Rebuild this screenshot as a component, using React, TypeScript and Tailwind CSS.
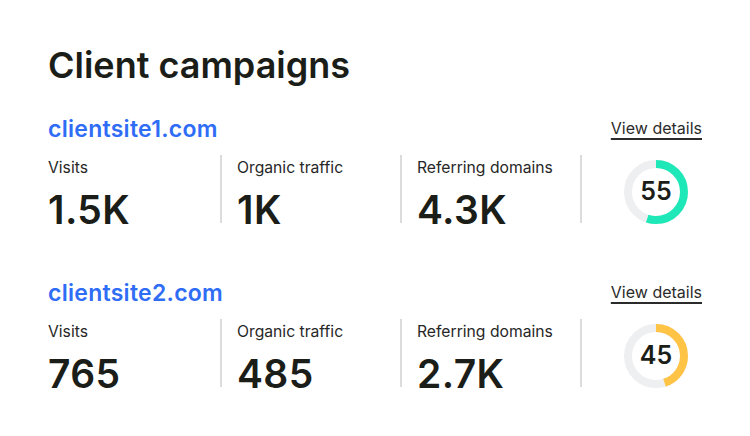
import React from "react";

type Metric = { label: string; value: string };

type Campaign = {
  domain: string;
  metrics: Metric[];
  score: number;
  color: string;
};

const campaigns: Campaign[] = [
  {
    domain: "clientsite1.com",
    metrics: [
      { label: "Visits", value: "1.5K" },
      { label: "Organic traffic", value: "1K" },
      { label: "Referring domains", value: "4.3K" },
    ],
    score: 55,
    color: "#1fe8b8",
  },
  {
    domain: "clientsite2.com",
    metrics: [
      { label: "Visits", value: "765" },
      { label: "Organic traffic", value: "485" },
      { label: "Referring domains", value: "2.7K" },
    ],
    score: 45,
    color: "#ffc445",
  },
];

function ScoreRing({ score, color }: { score: number; color: string }) {
  const r = 28;
  const c = 2 * Math.PI * r;
  return (
    <div className="relative h-16 w-16">
      <svg width="64" height="64" viewBox="0 0 64 64" className="-rotate-90">
        <circle cx="32" cy="32" r={r} fill="none" stroke="#eeeff1" strokeWidth="8" />
        <circle
          cx="32"
          cy="32"
          r={r}
          fill="none"
          stroke={color}
          strokeWidth="8"
          strokeDasharray={`${(c * score) / 100} ${c}`}
        />
      </svg>
      <span className="absolute inset-0 flex items-center justify-center text-[25px] font-semibold text-[#1b1d18]">
        {score}
      </span>
    </div>
  );
}

function CampaignBlock({ campaign }: { campaign: Campaign }) {
  return (
    <div>
      <div className="flex h-8 items-start justify-between">
        <a className="text-[23px] font-semibold leading-8 tracking-[0.012em] text-[#2f6df6]">
          {campaign.domain}
        </a>
        <a className="mt-[5px] text-[16px] leading-5 text-[#2b2b2b] underline decoration-[1.5px] underline-offset-[4px]">
          View details
        </a>
      </div>
      <div className="mt-[10px] flex h-[68px]">
        {campaign.metrics.map((m, i) => (
          <div
            key={m.label}
            className={
              i === 0
                ? "w-[172px] pt-[3px]"
                : "w-[180px] border-l-2 border-[#dcdcdc] pl-[15px] pt-[3px]"
            }
          >
            <p className="text-[15.7px] leading-5 text-[#272727]">{m.label}</p>
            <p className="mt-[12px] text-[39px] font-semibold leading-none tracking-[0.01em] text-[#1b1d18]">
              {m.value}
            </p>
          </div>
        ))}
        <div className="flex items-center border-l-2 border-[#dcdcdc] pl-[42px] pt-[5px]">
          <ScoreRing score={campaign.score} color={campaign.color} />
        </div>
      </div>
    </div>
  );
}

export default function App() {
  return (
    <div
      className="h-[436px] w-[750px] bg-white px-12 pt-[44px]"
      style={{ fontFamily: "Inter, 'Noto Sans', sans-serif" }}
    >
      <h1 className="text-[36px] font-semibold leading-[1.2] text-[#1b1d18]">Client campaigns</h1>
      <div className="mt-[26px] flex flex-col gap-[54px]">
        {campaigns.map((c) => (
          <CampaignBlock key={c.domain} campaign={c} />
        ))}
      </div>
    </div>
  );
}
